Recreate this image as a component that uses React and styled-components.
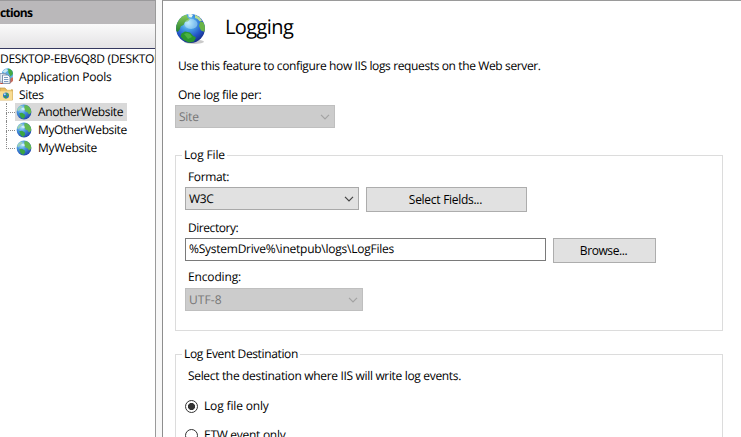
import React from "react";
import styled, { createGlobalStyle } from "styled-components";

const GlobalStyle = createGlobalStyle`
  * { box-sizing: border-box; }
  body {
    margin: 0;
    background: #fff;
    color: #000;
    font: 12px/16px "Open Sans", "Noto Sans", sans-serif;
    text-rendering: geometricPrecision;
    overflow: hidden;
  }
`;

const Window = styled.div`
  display: flex;
  gap: 6px;
  width: 741px;
  height: 437px;
  overflow: hidden;
  background: #f8f8f8;
`;

const Sidebar = styled.aside`
  width: 156px;
  flex: none;
  background: #fff;
  border-top: 1px solid #9a999b;
  border-right: 1px solid #9a9a9a;
  overflow: hidden;
`;

const SidebarTitle = styled.div`
  height: 23px;
  background: #bab8ba;
  font-weight: 700;
  line-height: 22px;
  padding-top: 1px;
  letter-spacing: -0.65px;
`;

const SidebarToolbar = styled.div`
  height: 25px;
  background: linear-gradient(#fafafa, #e4e3e5);
  border-bottom: 1px solid #34385f;
`;

const Text = styled.span`
  white-space: pre;
  letter-spacing: ${(p) => p.$spacing ?? -0.3}px;
`;

const TreeRow = styled.div`
  display: flex;
  align-items: center;
  height: 18px;
  line-height: 17px;
  padding-left: ${(p) => p.$indent ?? 0}px;
  white-space: nowrap;
`;

const TreeIcon = styled.span`
  flex: none;
  display: flex;
  width: 13px;
  margin-right: 6px;
`;

const Branch = styled.span`
  flex: none;
  width: 9px;
  height: 18px;
  display: flex;
  flex-direction: column;
  &::before {
    content: "";
    height: 10px;
    border-left: 1px dotted #8a8a8a;
    border-bottom: 1px dotted #8a8a8a;
  }
  &::after {
    content: "";
    height: 8px;
    border-left: ${(p) => (p.$last ? "none" : "1px dotted #8a8a8a")};
  }
`;

const SiteItem = styled.span`
  display: flex;
  align-items: center;
  gap: 6px;
  height: 18px;
  padding: 0 4px 0 1px;
  line-height: 16px;
  background: ${(p) => (p.$selected ? "#d9d9d9" : "transparent")};
`;

const Main = styled.main`
  flex: 1;
  background: #fff;
  border-top: 1px solid #9a9a9a;
  border-left: 1px solid #8e8e8e;
  padding: 12px 18px 0 12px;
`;

const PageHeader = styled.header`
  display: flex;
  align-items: flex-start;
  gap: 18px;
  height: 44px;
`;

const PageTitle = styled.h1`
  margin: 0;
  font-size: 20px;
  font-weight: 400;
  line-height: 28px;
  letter-spacing: -0.6px;
`;

const Line = styled.div`
  height: 16px;
  margin-top: ${(p) => p.$top ?? 0}px;
  padding-left: 3px;
  white-space: nowrap;
`;

const Select = styled.div`
  display: flex;
  align-items: center;
  justify-content: space-between;
  width: ${(p) => p.$width}px;
  height: 23px;
  padding: 0 4px 0 3px;
  border: 1px solid ${(p) => (p.$disabled ? "#bfbfbf" : "#a9a9a9")};
  background: ${(p) => (p.$disabled ? "#cccccc" : "#e1e1e1")};
  color: ${(p) => (p.$disabled ? "#757575" : "#000")};
  line-height: 18px;
`;

const Group = styled.fieldset`
  margin: ${(p) => p.$top}px 0 0;
  min-width: 0;
  width: 548px;
  height: 184px;
  padding: 0 9px;
  border: 1px solid #dcdcdc;
`;

const Legend = styled.legend`
  height: 16px;
  margin-left: -3px;
  padding: 0 2px;
`;

const Controls = styled.div`
  display: flex;
  align-items: flex-start;
  gap: 7px;
  margin-top: ${(p) => p.$top}px;
`;

const Button = styled.button`
  width: ${(p) => p.$width}px;
  height: 25px;
  padding: 0 2px 0 0;
  border: 1px solid #adadad;
  border-radius: 0;
  background: #e1e1e1;
  color: #000;
  font: inherit;
`;

const TextField = styled.div`
  width: 361px;
  height: 23px;
  padding: 0 3px;
  border: 1px solid #7a7a7a;
  line-height: 20px;
`;

const RadioRow = styled.div`
  display: flex;
  align-items: center;
  gap: 6px;
  height: 16px;
  margin-top: ${(p) => p.$top}px;
`;

const RadioMark = styled.span`
  width: 13px;
  height: 13px;
  border: 1px solid #333;
  border-radius: 50%;
  background: ${(p) =>
    p.$checked ? "radial-gradient(circle, #333 0 3.2px, #fff 3.9px)" : "#fff"};
`;

const Chevron = ({ color = "#444" }) => (
  <svg width="10" height="6" viewBox="0 0 10 6" fill="none" stroke={color} strokeWidth="1.2">
    <path d="M1 .8 5 4.8 9 .8" />
  </svg>
);

const BigGlobe = () => (
  <svg width="32" height="32" viewBox="0 0 32 32">
    <defs>
      <radialGradient id="sea" cx=".42" cy=".3" r=".7">
        <stop offset="0" stopColor="#a9e6fb" />
        <stop offset=".35" stopColor="#459fe6" />
        <stop offset=".72" stopColor="#2456c8" />
        <stop offset="1" stopColor="#172f8e" />
      </radialGradient>
      <linearGradient id="land" x1="0" y1="0" x2="0" y2="1">
        <stop offset="0" stopColor="#8ccb5e" />
        <stop offset="1" stopColor="#23822b" />
      </linearGradient>
      <clipPath id="disc"><circle cx="15.5" cy="15.5" r="14.4" /></clipPath>
    </defs>
    <ellipse cx="19" cy="28.8" rx="10" ry="2.2" fill="#777" opacity=".4" />
    <circle cx="15.5" cy="15.5" r="14.4" fill="url(#sea)" />
    <g clipPath="url(#disc)">
      <path d="M1 12 4 6 8 2.6 12 1.5 12.5 4.5 15 6.5 12.8 8.5 10 9 8.5 12 5.8 13.2 4.5 17 2.4 19 0 17Z" fill="url(#land)" />
      <path d="M13 1 16 .8 18 2 16.5 4.5 13.8 4Z" fill="#e9faef" />
      <path d="M20 1.8 25 4.5 27 8 24.5 8.2 22.5 6 20 5Z" fill="#b5dc91" />
      <path d="M25.2 8.5 28 9 31 14 29.5 19 26 17.5 24 13Z" fill="#69b446" />
      <path d="M6.5 20.5 10 18.4 15 19.4 18 22.8 21 24.5 19 28.4 14 29.8 8.5 27 5.5 23.5Z" fill="#2a962f" />
      <path d="M9 21 12 20 15 21 17 24 13 26Z" fill="#4bb343" />
      <ellipse cx="16" cy="11" rx="6.5" ry="5" fill="#dff8ff" opacity=".4" />
    </g>
  </svg>
);

const SmallGlobe = () => (
  <svg width="16" height="16" viewBox="0 0 16 16">
    <defs>
      <radialGradient id="smallSea" cx=".35" cy=".3" r=".75">
        <stop offset="0" stopColor="#b5e4f8" />
        <stop offset=".45" stopColor="#4594e0" />
        <stop offset="1" stopColor="#2145ac" />
      </radialGradient>
      <clipPath id="smallDisc"><circle cx="8" cy="8" r="7.4" /></clipPath>
    </defs>
    <circle cx="8" cy="8" r="7.4" fill="url(#smallSea)" />
    <g clipPath="url(#smallDisc)">
      <path d="M8.5 1 12 1.5 15 5 15.4 8.5 13 10.5 11.5 8.3 9.5 7.6 8.2 5Z" fill="#62b850" />
      <path d="M3.2 9.2 6 8.8 8.8 10.4 9.2 12.5 7 15 4.6 13Z" fill="#3aa642" />
      <path d="M1 5.5 3.5 2.4 6.5 1.5 6 3.5 4 5.2 2 7.5Z" fill="#9dd2b4" />
      <path d="M5.5 4.3 8 3.6 9 5.5 7 6.6Z" fill="#dff5fd" opacity=".8" />
    </g>
  </svg>
);

const PoolsIcon = () => (
  <svg width="13" height="16" viewBox="0 0 13 16">
    <circle cx="7.5" cy="6" r="5.8" fill="#5eaee4" />
    <path d="M8 .5Q12.5 1 13 6L10.5 8.5 8.5 5Z" fill="#45a943" />
    <path d="M2.5 3.5 6 .8 8 2.4 5 5Z" fill="#c6e7f2" />
    <path d="M9 11.5 13 9v4l-3 2.6Z" fill="#c86c5c" />
    <path d="M0 5.5H6V14H0Z" fill="#e9f0f7" stroke="#7b91ac" strokeWidth=".8" />
    <path d="M2.5 7H8L10 9V15.4H2.5Z" fill="#f9fbfd" stroke="#7086a2" strokeWidth=".9" />
    <path d="M4 9.5H8M4 11.5H8.4M4 13.5H8.4" stroke="#6d8fb8" strokeWidth=".9" />
    <path d="M0 15.2 3 15.8" stroke="#bd4a3a" />
  </svg>
);

const FolderIcon = () => (
  <svg width="13" height="16" viewBox="0 0 13 16">
    <path d="M0 2H5L6.5 3.8H12.6V14H0Z" fill="#e9bf63" stroke="#c39a42" strokeWidth=".7" />
    <path d="M0 5.3H12.4V14.2H0Z" fill="#f8dc93" />
    <path d="M7 2.8H11V4.2H7Z" fill="#fff6d7" />
    <circle cx="6" cy="9.6" r="3" fill="#2876c6" />
    <path d="M6 6.8Q8.6 7.2 8.8 9.5L7.4 10.2Z" fill="#52a83b" />
    <path d="M4 10.2 6.3 10 6.6 12.4 5 12.2Z" fill="#3f9d3c" />
    <circle cx="4.8" cy="8.3" r="1" fill="#b3e1f5" />
  </svg>
);

const sites = [
  { name: "AnotherWebsite", selected: true, spacing: -0.38 },
  { name: "MyOtherWebsite", spacing: -0.4 },
  { name: "MyWebsite", spacing: -0.3 },
];

export default function App() {
  return (
    <>
      <GlobalStyle />
      <Window>
        <Sidebar>
          <SidebarTitle>ctions</SidebarTitle>
          <SidebarToolbar />
          <TreeRow>
            <Text $spacing={-0.33}>DESKTOP-EBV6Q8D (DESKTOP-EBV6Q8D)</Text>
          </TreeRow>
          <TreeRow>
            <TreeIcon><PoolsIcon /></TreeIcon>
            <Text $spacing={-0.21}>Application Pools</Text>
          </TreeRow>
          <TreeRow>
            <TreeIcon><FolderIcon /></TreeIcon>
            <Text $spacing={-0.35}>Sites</Text>
          </TreeRow>
          {sites.map((site, i) => (
            <TreeRow key={site.name} $indent={6}>
              <Branch $last={i === sites.length - 1} />
              <SiteItem $selected={site.selected}>
                <SmallGlobe />
                <Text $spacing={site.spacing}>{site.name}</Text>
              </SiteItem>
            </TreeRow>
          ))}
        </Sidebar>
        <Main>
          <PageHeader>
            <BigGlobe />
            <PageTitle>Logging</PageTitle>
          </PageHeader>
          <Line $top={1}>
            <Text $spacing={-0.375}>Use this feature to configure how IIS logs requests on the Web server.</Text>
          </Line>
          <Line $top={13}>
            <Text $spacing={-0.3}>One log file per:</Text>
          </Line>
          <Controls $top={2}>
            <Select $width={160} $disabled>
              <Text $spacing={-0.25}>Site</Text>
              <Chevron color="#a3a3a3" />
            </Select>
          </Controls>
          <Group $top={19}>
            <Legend><Text $spacing={-0.15}>Log File</Text></Legend>
            <Line $top={6}><Text $spacing={-0.35}>Format:</Text></Line>
            <Controls $top={2}>
              <Select $width={174}>
                <Text>W3C</Text>
                <Chevron />
              </Select>
              <Button $width={161}><Text $spacing={-0.28}>Select Fields...</Text></Button>
            </Controls>
            <Line $top={8}><Text $spacing={-0.45}>Directory:</Text></Line>
            <Controls $top={2}>
              <TextField>
                <Text $spacing={-0.245}>%SystemDrive%\inetpub\logs\LogFiles</Text>
              </TextField>
              <Button $width={103}><Text $spacing={-0.42}>Browse...</Text></Button>
            </Controls>
            <Line $top={6}><Text $spacing={-0.15}>Encoding:</Text></Line>
            <Controls $top={3}>
              <Select $width={178} $disabled>
                <Text $spacing={0.1}>UTF-8</Text>
                <Chevron color="#a3a3a3" />
              </Select>
            </Controls>
          </Group>
          <Group $top={15}>
            <Legend><Text $spacing={-0.37}>Log Event Destination</Text></Legend>
            <Line $top={6}>
              <Text $spacing={-0.33}>Select the destination where IIS will write log events.</Text>
            </Line>
            <RadioRow $top={14}>
              <RadioMark $checked />
              <Text $spacing={-0.15}>Log file only</Text>
            </RadioRow>
            <RadioRow $top={13}>
              <RadioMark />
              <Text $spacing={-0.28}>ETW event only</Text>
            </RadioRow>
          </Group>
        </Main>
      </Window>
    </>
  );
}
